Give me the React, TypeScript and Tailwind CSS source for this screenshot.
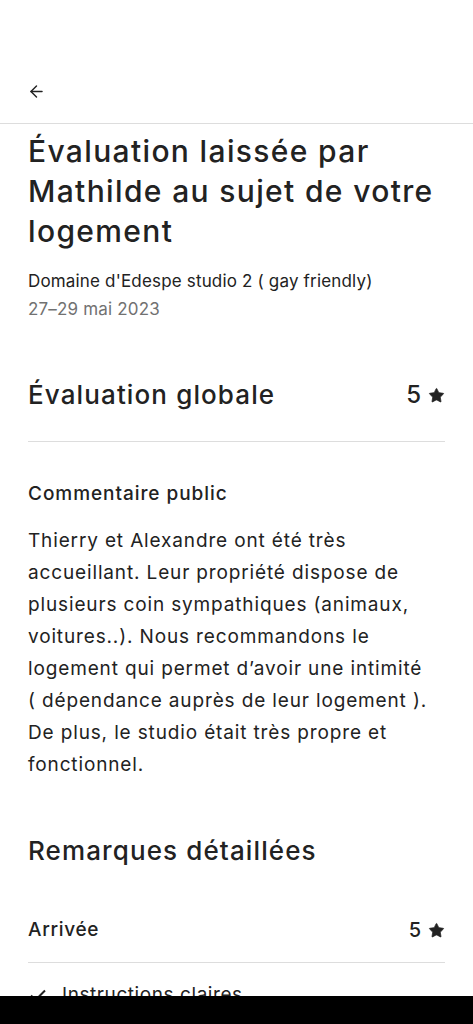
import { ArrowLeft, Star } from "lucide-react";

const Rating = ({ value, size }: { value: number; size: string }) => (
  <div className={`flex items-center gap-[7px] text-[#222] ${size}`}>
    <span>{value}</span>
    <Star className="w-[17px] h-[17px] fill-[#222] stroke-[#222]" strokeWidth={1} />
  </div>
);

const comment = [
  "Thierry et Alexandre ont été très",
  "accueillant. Leur propriété dispose de",
  "plusieurs coin sympathiques (animaux,",
  "voitures..). Nous recommandons le",
  "logement qui permet d’avoir une intimité",
  "( dépendance auprès de leur logement ).",
  "De plus, le studio était très propre et",
  "fonctionnel.",
];

export default function App() {
  return (
    <div className="w-[473px] h-[1024px] bg-white overflow-hidden relative font-['Inter',sans-serif] text-[#222]">
      <div className="h-[124px] flex items-end pb-[22px] px-[27px] border-b border-[#dddddd]">
        <ArrowLeft className="w-[19px] h-[19px] text-[#222]" strokeWidth={1.8} />
      </div>

      <div className="px-[28px]">
        <h1 className="mt-[7px] text-[30px] leading-[40px] font-medium tracking-[0.045em]">
          Évaluation laissée par
          <br />
          Mathilde au sujet de votre
          <br />
          logement
        </h1>
        <div className="mt-[16px] text-[17px] leading-[28px] tracking-[0.01em]">
          <div className="text-[#222]">Domaine d'Edespe studio 2 ( gay friendly)</div>
          <div className="text-[#717171]">27–29 mai 2023</div>
        </div>

        <div className="mt-[53px] flex items-center justify-between pb-[27px] border-b border-[#dddddd]">
          <h2 className="text-[26px] leading-[38px] font-medium tracking-[0.043em]">Évaluation globale</h2>
          <Rating value={5} size="text-[24px] font-medium" />
        </div>

        <div className="mt-[39px] text-[19px] leading-[26px] font-medium tracking-[0.05em]">Commentaire public</div>
        <div className="mt-[18px] text-[19px] leading-[32px] tracking-[0.045em]">
          {comment.map((l) => (
            <div key={l} className="whitespace-nowrap">
              {l}
            </div>
          ))}
        </div>

        <h2 className="mt-[51px] text-[26px] leading-[38px] font-medium tracking-[0.043em]">Remarques détaillées</h2>

        <div className="mt-[45px] flex items-center justify-between pb-[17px] border-b border-[#dddddd]">
          <div className="text-[19px] leading-[28px] font-medium tracking-[0.037em]">Arrivée</div>
          <Rating value={5} size="text-[20px] font-medium" />
        </div>

        <div className="mt-[19px] flex items-center gap-[14px] text-[19px] leading-[26px] tracking-[0.03em]">
          <svg width="20" height="20" viewBox="0 0 20 20" fill="none" stroke="#222" strokeWidth="2">
            <path d="M3 10.5l4.5 4.5L17 5.5" />
          </svg>
          <span>Instructions claires</span>
        </div>
      </div>

      <div className="absolute left-0 right-0 bottom-0 h-[28px] bg-black" />
    </div>
  );
}
